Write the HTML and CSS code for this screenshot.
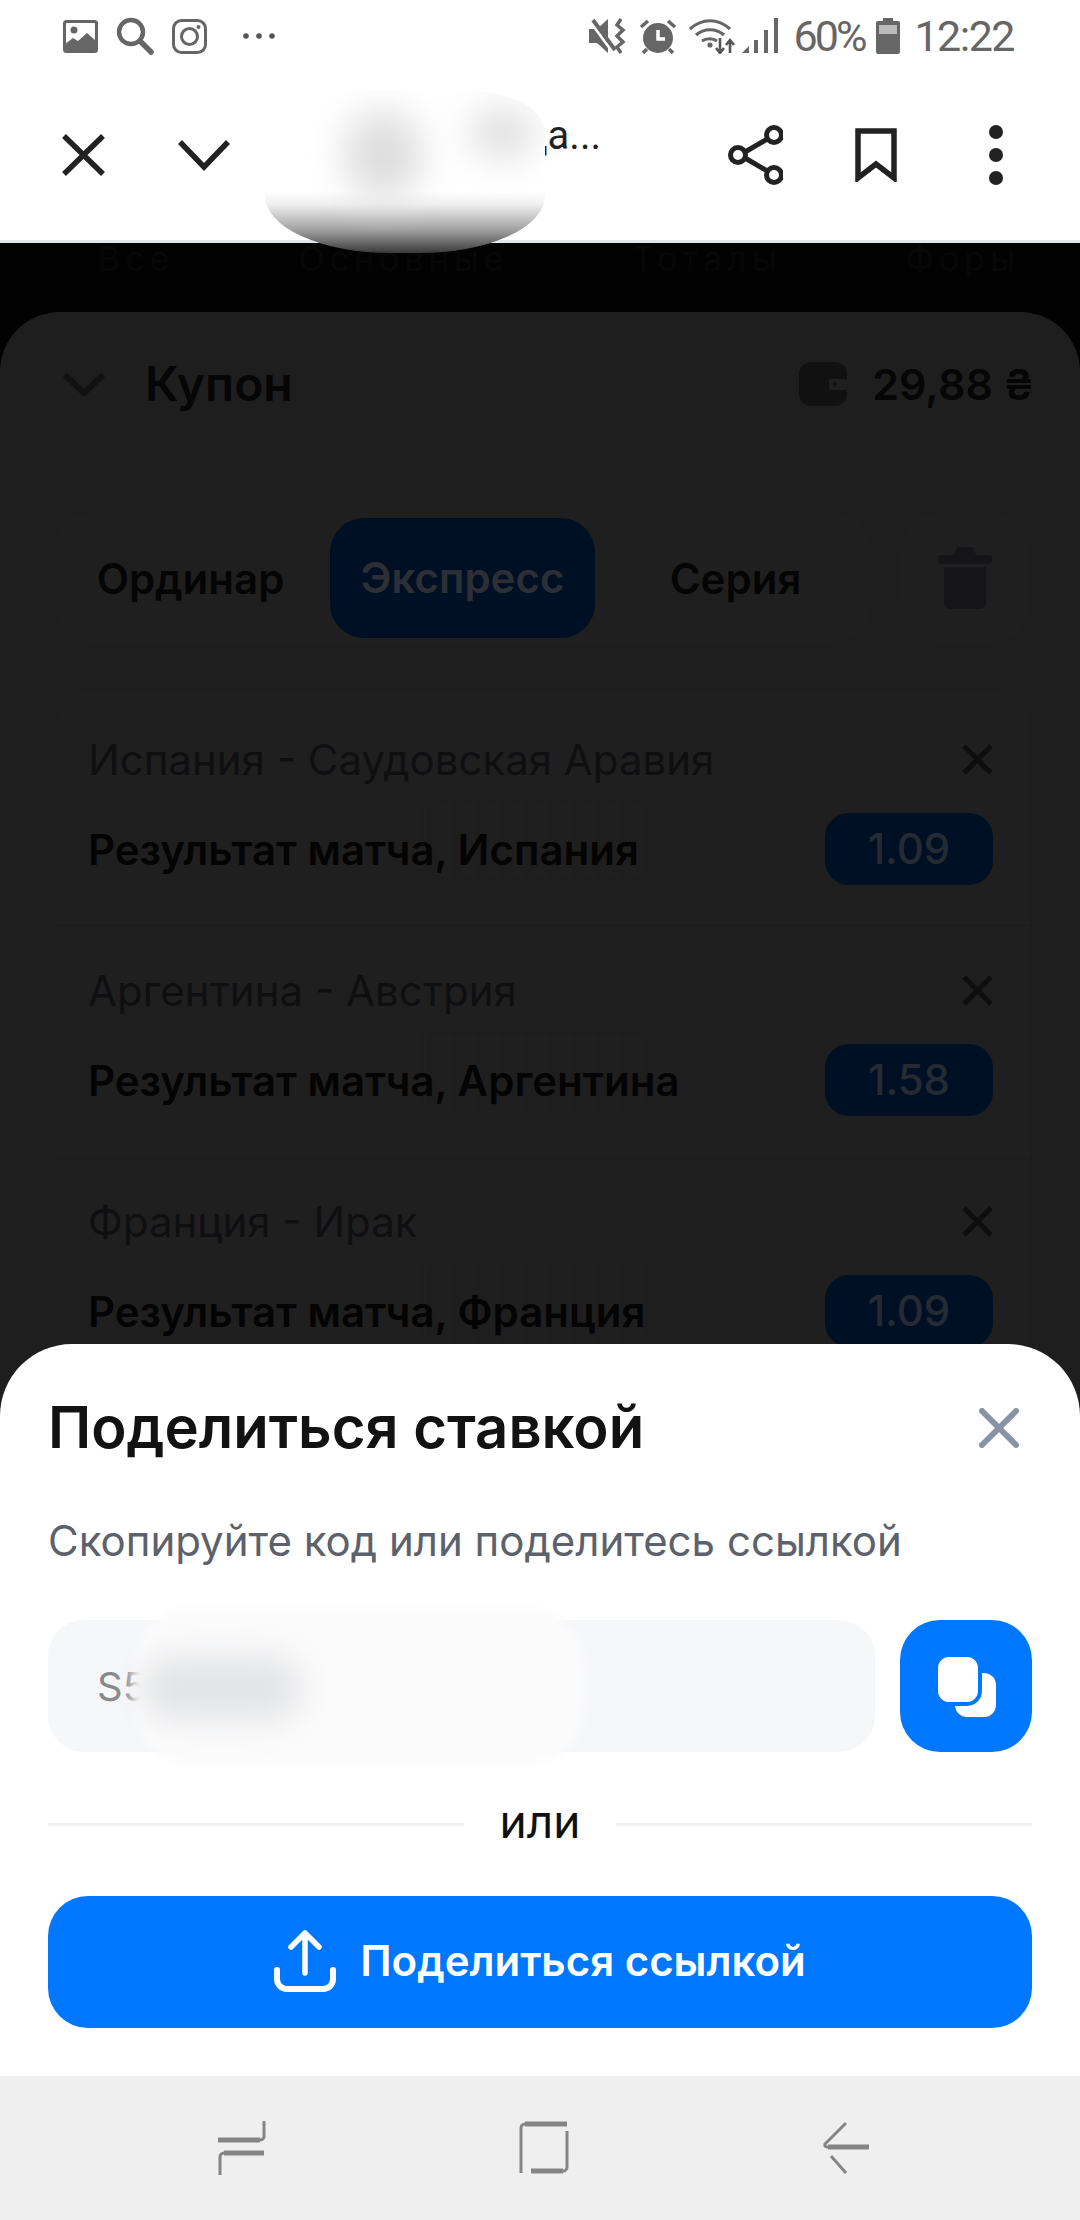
FILE: index.html
```html
<!DOCTYPE html>
<html lang="ru">
  <head>
    <meta charset="UTF-8" />
    <title>Поделиться ставкой</title>
    <link rel="stylesheet" href="styles.css">
  </head>
  <body>
    <div class="phone">
      <div class="status-bar">
        <svg class="st-image" width="35" height="33" viewBox="0 0 35 33"><rect x="1.5" y="1.5" width="32" height="30" rx="2" fill="#fff" stroke="#666" stroke-width="3"/><circle cx="11" cy="10" r="3.5" fill="#666"/><path d="M2 24l8-6 5 3 9-8 9 8v10H2z" fill="#666"/></svg>
        <svg class="st-search" width="38" height="38" viewBox="0 0 38 38"><circle cx="15" cy="15" r="12" fill="none" stroke="#666" stroke-width="4.5"/><path d="M24 24l11 11" stroke="#666" stroke-width="5.5" stroke-linecap="round"/></svg>
        <svg class="st-insta" width="35" height="35" viewBox="0 0 35 35"><rect x="1.5" y="1.5" width="32" height="32" rx="8" fill="none" stroke="#666" stroke-width="3"/><circle cx="17.5" cy="17.5" r="8" fill="none" stroke="#666" stroke-width="3"/><circle cx="26.5" cy="8" r="2" fill="#666"/></svg>
        <svg class="st-more" width="32" height="6" viewBox="0 0 32 6"><circle cx="3" cy="3" r="2.8" fill="#555"/><circle cx="16" cy="3" r="2.8" fill="#555"/><circle cx="29" cy="3" r="2.8" fill="#555"/></svg>
        <div class="status-right">
          <svg width="38" height="36" viewBox="0 0 38 36"><path d="M0 11h8l11-10v34L8 25H0z" fill="#666"/><path d="M2 2l22 30" stroke="#fff" stroke-width="6"/><path d="M4 2l22 30" stroke="#666" stroke-width="4"/><path d="M32 1l-4 6 6 5-6 6 6 6-6 5 4 6" fill="none" stroke="#666" stroke-width="3.5"/></svg>
          <svg width="38" height="36" viewBox="0 0 38 36"><circle cx="19" cy="20" r="15" fill="#666"/><path d="M19 12v9h7" fill="none" stroke="#fff" stroke-width="3.5"/><path d="M2 9l7-6M36 9l-7-6M8 31l-4 4M30 31l4 4" stroke="#666" stroke-width="3.5"/></svg>
          <svg width="46" height="36" viewBox="0 0 46 36"><path d="M1 11c12-11 28-11 40 0M7 17c8-7 20-7 28 0M13 23c4-3 11-3 15 0" fill="none" stroke="#666" stroke-width="3.2"/><circle cx="21" cy="27" r="2.6" fill="#666"/><path d="M31 20v14m-4-4l4 5 4-5M41 35V23m-4 4l4-5 4 5" fill="none" stroke="#555" stroke-width="2.6"/></svg>
          <svg class="st-signal" width="36" height="36" viewBox="0 0 36 36"><path d="M0 35l7-7v7z" fill="#666"/><rect x="12" y="22" width="4" height="13" fill="#666"/><rect x="22" y="12" width="4" height="23" fill="#666"/><rect x="32" y="0" width="4" height="35" fill="#666"/></svg>
          <span class="st-text st-percent">60%</span>
          <svg class="st-battery" width="24" height="36" viewBox="0 0 24 36"><path d="M7 0h10v3h5a2 2 0 0 1 2 2v29a2 2 0 0 1-2 2H2a2 2 0 0 1-2-2V5a2 2 0 0 1 2-2h5z" fill="#666"/><rect x="3" y="7" width="18" height="9" fill="#bbb"/></svg>
          <span class="st-text st-time">12:22</span>
        </div>
      </div>

      <div class="toolbar">
        <svg class="tb-close" width="43" height="42" viewBox="0 0 43 42"><path d="M2 2l39 38M41 2L2 40" stroke="#222" stroke-width="5.5"/></svg>
        <svg class="tb-chevron" width="52" height="32" viewBox="0 0 52 32"><path d="M2 3l24 25L50 3" fill="none" stroke="#222" stroke-width="5.5"/></svg>
        <div class="tb-title">да...</div>
        <svg class="tb-share" width="55" height="60" viewBox="0 0 55 60"><path d="M12 30L46 10M12 30l34 20" stroke="#222" stroke-width="5"/><circle cx="46" cy="10" r="7.5" fill="#fff" stroke="#222" stroke-width="5"/><circle cx="10" cy="30" r="7.5" fill="#fff" stroke="#222" stroke-width="5"/><circle cx="46" cy="50" r="7.5" fill="#fff" stroke="#222" stroke-width="5"/></svg>
        <svg class="tb-bookmark" width="42" height="54" viewBox="0 0 42 54"><path d="M3 50V3h36v47L21 36z" fill="none" stroke="#222" stroke-width="5.5"/></svg>
        <svg class="tb-more" width="14" height="60" viewBox="0 0 14 60"><circle cx="7" cy="7" r="7" fill="#222"/><circle cx="7" cy="30" r="7" fill="#222"/><circle cx="7" cy="53" r="7" fill="#222"/></svg>
      </div>

      <div class="screen">
        <div class="market-tabs">
          <span>Все</span>
          <span>Основные</span>
          <span>Тоталы</span>
          <span>Форы</span>
        </div>

        <div class="coupon">
          <div class="coupon-head">
            <svg class="coupon-chevron" width="44" height="24" viewBox="0 0 44 24"><path d="M3 3l19 18L41 3" fill="none" stroke="#111" stroke-width="6"/></svg>
            <div class="coupon-title">Купон</div>
            <svg class="wallet" width="48" height="44" viewBox="0 0 48 44"><rect width="48" height="44" rx="12" fill="#111"/><rect x="30" y="17" width="18" height="11" rx="2" fill="#1f1f1f"/><circle cx="36" cy="22.5" r="2" fill="#111"/></svg>
            <div class="balance">29,88 ₴</div>
          </div>

          <div class="type-row">
            <div class="type-tabs">
              <div class="type-tab">Ординар</div>
              <div class="type-tab type-tab-active">Экспресс</div>
              <div class="type-tab">Серия</div>
            </div>
            <div class="trash-box">
              <svg width="54" height="62" viewBox="0 0 54 62"><path d="M16 8l2-5a4 4 0 0 1 3-3h12a4 4 0 0 1 3 3l2 5z" fill="#151517"/><rect y="8" width="54" height="9" rx="3" fill="#151517"/><path d="M6 20h42v36a6 6 0 0 1-6 6H12a6 6 0 0 1-6-6z" fill="#151517"/></svg>
            </div>
          </div>

          <div class="bets">
            <div class="bet">
              <div class="bet-smudge"></div>
              <div class="bet-line">
                <div class="bet-match">Испания - Саудовская Аравия</div>
                <svg width="31" height="31" viewBox="0 0 31 31"><path d="M2 2l27 27M29 2L2 29" stroke="#0e0e0e" stroke-width="5"/></svg>
              </div>
              <div class="bet-line bet-pick">
                <div class="bet-result">Результат матча, Испания</div>
                <div class="bet-odds">1.09</div>
              </div>
            </div>
            <div class="bet">
              <div class="bet-smudge"></div>
              <div class="bet-line">
                <div class="bet-match">Аргентина - Австрия</div>
                <svg width="31" height="31" viewBox="0 0 31 31"><path d="M2 2l27 27M29 2L2 29" stroke="#0e0e0e" stroke-width="5"/></svg>
              </div>
              <div class="bet-line bet-pick">
                <div class="bet-result">Результат матча, Аргентина</div>
                <div class="bet-odds">1.58</div>
              </div>
            </div>
            <div class="bet">
              <div class="bet-smudge"></div>
              <div class="bet-line">
                <div class="bet-match">Франция - Ирак</div>
                <svg width="31" height="31" viewBox="0 0 31 31"><path d="M2 2l27 27M29 2L2 29" stroke="#0e0e0e" stroke-width="5"/></svg>
              </div>
              <div class="bet-line bet-pick">
                <div class="bet-result">Результат матча, Франция</div>
                <div class="bet-odds">1.09</div>
              </div>
            </div>
          </div>
        </div>

        <div class="share-sheet">
          <div class="sheet-head">
            <h2 class="sheet-title">Поделиться ставкой</h2>
            <svg class="sheet-close" width="40" height="40" viewBox="0 0 40 40"><path d="M3 3l34 34M37 3L3 37" stroke="#8a92a5" stroke-width="6" stroke-linecap="round"/></svg>
          </div>
          <p class="sheet-text">Скопируйте код или поделитесь ссылкой</p>
          <div class="code-row">
            <div class="code-field">
              <span>S5</span>
              <div class="code-blur"></div>
              <div class="code-smudge"></div>
            </div>
            <div class="copy-btn">
              <svg width="60" height="62" viewBox="0 0 60 62"><rect x="19" y="18" width="41" height="44" rx="12" fill="#fff"/><rect x="0" y="0" width="44" height="49" rx="13" fill="#fff" stroke="#0077ff" stroke-width="4"/></svg>
            </div>
          </div>
          <div class="or-row"><span>или</span></div>
          <div class="share-btn">
            <svg width="62" height="62" viewBox="0 0 62 62"><path d="M31 43V4M17 17L31 3l14 14" fill="none" stroke="#fff" stroke-width="5.5" stroke-linecap="round" stroke-linejoin="round"/><path d="M3 40v9a10 10 0 0 0 10 10h36a10 10 0 0 0 10-10v-9" fill="none" stroke="#fff" stroke-width="6" stroke-linecap="round"/></svg>
            <span>Поделиться ссылкой</span>
          </div>
        </div>
      </div>

      <div class="nav-bar">
        <svg width="50" height="56" viewBox="0 0 50 56"><path d="M48 1v14a4 4 0 0 1-4 5H2" fill="none" stroke="#858585" stroke-width="3"/><path d="M2 20h42" stroke="#858585" stroke-width="5"/><path d="M48 33H8a4 4 0 0 0-4 4v18" fill="none" stroke="#858585" stroke-width="3"/><path d="M8 33h40" stroke="#858585" stroke-width="5"/></svg>
        <svg width="50" height="54" viewBox="0 0 50 54"><path d="M2 52V7a4 4 0 0 1 4-4h42" fill="none" stroke="#858585" stroke-width="3"/><path d="M6 3h42" stroke="#858585" stroke-width="5"/><path d="M48 10v36a4 4 0 0 1-4 4H12" fill="none" stroke="#858585" stroke-width="3"/><path d="M12 50h32" stroke="#858585" stroke-width="5"/></svg>
        <svg width="48" height="54" viewBox="0 0 48 54"><path d="M24 2L3 23q-1 3 3 3h41" fill="none" stroke="#858585" stroke-width="3"/><path d="M6 26h41" stroke="#858585" stroke-width="5"/><path d="M9 35l15 17" stroke="#858585" stroke-width="3"/></svg>
      </div>

      <div class="title-blob">
        <div class="blob-spot blob-spot-a"></div>
        <div class="blob-spot blob-spot-b"></div>
      </div>
    </div>
  </body>
</html>
```

FILE: styles.css
```css
* {
  margin: 0;
  padding: 0;
  box-sizing: border-box;
}

body {
  font-family: "Inter", "Liberation Sans", sans-serif;
  background: #fff;
}

.phone {
  width: 1080px;
  height: 2220px;
  position: relative;
  display: flex;
  flex-direction: column;
  overflow: hidden;
}

/* status bar */
.status-bar {
  height: 72px;
  flex: none;
  display: flex;
  align-items: center;
  padding: 0 66px 0 63px;
  background: #fff;
}
.st-search { margin-left: 18px; }
.st-insta { margin-left: 18px; }
.st-more { margin-left: 36px; }
.status-right {
  margin-left: auto;
  display: flex;
  align-items: center;
  gap: 12px;
}
.st-signal { margin-left: -5px; }
.st-text {
  font-family: "Roboto", sans-serif;
  font-size: 43px;
  color: #666;
  line-height: 44px;
}
.st-percent { margin-left: 4px; letter-spacing: -3px; }
.st-time { margin-left: 2px; letter-spacing: -1.5px; }

/* browser toolbar */
.toolbar {
  height: 171px;
  flex: none;
  display: flex;
  align-items: center;
  padding: 0 77px 3px 62px;
  background: #fff;
  border-bottom: 3px solid #e4e6ee;
}
.tb-chevron { margin-left: 73px; }
.tb-title {
  flex: 1;
  text-align: right;
  font-family: "Roboto", sans-serif;
  font-size: 40px;
  color: #222;
  margin: -38px 127px 0 0;
  line-height: 50px;
}
.tb-bookmark { margin-left: 72px; }
.tb-more { margin-left: 92px; }

/* blurred-out part of the title */
.title-blob {
  position: absolute;
  left: 265px;
  top: 90px;
  width: 280px;
  height: 163px;
  border-radius: 30% 30% 45% 45% / 25% 25% 35% 35%;
  background: linear-gradient(#fff 0, #fff 62%, #f0f0f0 70%, #a0a0a0 86%, #3a3a3a 100%);
  overflow: hidden;
}
.blob-spot {
  position: absolute;
  background: #dedede;
  border-radius: 50%;
  filter: blur(18px);
}
.blob-spot-a { left: 78px; top: 20px; width: 80px; height: 90px; }
.blob-spot-b { left: 205px; top: 18px; width: 65px; height: 50px; }

/* dimmed page behind the sheet */
.screen {
  flex: 1;
  min-height: 0;
  position: relative;
  display: flex;
  flex-direction: column;
  background: #020203;
}
.market-tabs {
  height: 74px;
  flex: none;
  margin-top: -5px;
  display: flex;
  gap: 124px;
  padding: 0 0 0 98px;
  font-size: 34px;
  letter-spacing: 5px;
  line-height: 41px;
  color: #070708;
}
.coupon {
  flex: 1;
  min-height: 0;
  overflow: hidden;
  background: #1e1e1e;
  border-radius: 60px 60px 0 0;
}
.coupon-head {
  height: 148px;
  display: flex;
  align-items: center;
  padding: 0 46px 4px 62px;
  border-bottom: 1px solid #212121;
}
.coupon-title {
  margin-left: 39px;
  flex: 1;
  font-size: 48px;
  font-weight: 600;
  color: #060606;
}
.balance {
  margin-left: 25px;
  font-size: 43px;
  font-weight: 600;
  color: #060606;
}

.type-row {
  display: flex;
  margin: 53px 52px 0 55px;
  gap: 31px;
}
.type-tabs {
  flex: 1;
  height: 130px;
  display: grid;
  grid-template-columns: 275px 265px 1fr;
  align-items: center;
  background: #1f1f1f;
  border-radius: 36px;
  font-size: 42px;
  font-weight: 600;
  color: #050505;
  text-align: center;
}
.type-tab:first-child { padding-right: 4px; }
.type-tab:last-child { padding-left: 5px; }
.type-tab-active {
  height: 120px;
  line-height: 120px;
  background: #001024;
  color: #2c2f36;
  border-radius: 34px;
}
.trash-box {
  width: 126px;
  height: 130px;
  display: flex;
  align-items: center;
  justify-content: center;
  background: #1f1f1f;
  border-radius: 36px;
}

.bets {
  margin: 49px 50px 0 55px;
  background: #1f1f1f;
  border-radius: 36px;
}
.bet {
  position: relative;
  padding: 45px 37px 37px 33px;
  border-bottom: 1px solid #232323;
}
.bet-line {
  position: relative;
  display: flex;
  align-items: center;
  justify-content: space-between;
  height: 44px;
}
.bet-pick {
  height: 72px;
  margin-top: 32px;
}
.bet-match {
  font-size: 42px;
  color: #0f0f11;
}
.bet-result {
  font-size: 42px;
  font-weight: 600;
  color: #040404;
}
.bet-odds {
  width: 168px;
  height: 72px;
  line-height: 72px;
  text-align: center;
  background: #001024;
  border-radius: 24px;
  font-size: 42px;
  font-weight: 500;
  color: #252a33;
}
.bet-smudge {
  position: absolute;
  left: 372px;
  top: 108px;
  width: 222px;
  height: 80px;
  background: repeating-linear-gradient(90deg, #1e1e1e 0 12px, #1f1f1f 12px 24px);
  filter: blur(2px);
}

/* share sheet */
.share-sheet {
  position: absolute;
  left: 0;
  right: 0;
  bottom: 0;
  padding: 50px 48px 48px;
  background: #fff;
  border-radius: 72px 72px 0 0;
}
.sheet-head {
  height: 68px;
  display: flex;
  align-items: center;
  justify-content: space-between;
}
.sheet-title {
  margin-top: -3px;
  font-size: 58px;
  font-weight: 600;
  color: #121212;
}
.sheet-close { margin-right: 13px; }
.sheet-text {
  margin-top: 55px;
  font-size: 42px;
  line-height: 48px;
  color: #5c616b;
}
.code-row {
  margin-top: 55px;
  display: flex;
  gap: 25px;
}
.code-field {
  flex: 1;
  height: 132px;
  position: relative;
  display: flex;
  align-items: center;
  padding-left: 49px;
  background: #f6f7f9;
  border-radius: 36px;
  font-size: 40px;
  color: #888;
}
.code-blur {
  position: absolute;
  left: 85px;
  top: -12px;
  width: 452px;
  height: 156px;
  background: #fbfbfc;
  border-radius: 60px;
  filter: blur(5px);
}
.code-smudge {
  position: absolute;
  left: 93px;
  top: 36px;
  width: 160px;
  height: 64px;
  background: #e3e4e5;
  border-radius: 40px;
  filter: blur(16px);
}
.copy-btn {
  width: 132px;
  height: 132px;
  display: flex;
  align-items: center;
  justify-content: center;
  background: #0077ff;
  border-radius: 40px;
}
.or-row {
  margin-top: 48px;
  height: 48px;
  display: flex;
  align-items: center;
  gap: 36px;
  font-size: 46px;
  color: #101010;
}
.or-row span { margin-top: -6px; }
.or-row::before,
.or-row::after {
  content: "";
  flex: 1;
  height: 3px;
  background: #eff0f2;
}
.share-btn {
  margin-top: 48px;
  height: 132px;
  display: flex;
  align-items: center;
  justify-content: center;
  gap: 24px;
  padding-bottom: 3px;
  background: #0077ff;
  border-radius: 40px;
  font-size: 42px;
  font-weight: 600;
  color: #fff;
}

/* android nav bar */
.nav-bar {
  height: 144px;
  flex: none;
  display: flex;
  align-items: center;
  justify-content: space-between;
  padding: 0 210px 0 216px;
  background: #efefef;
}
```
